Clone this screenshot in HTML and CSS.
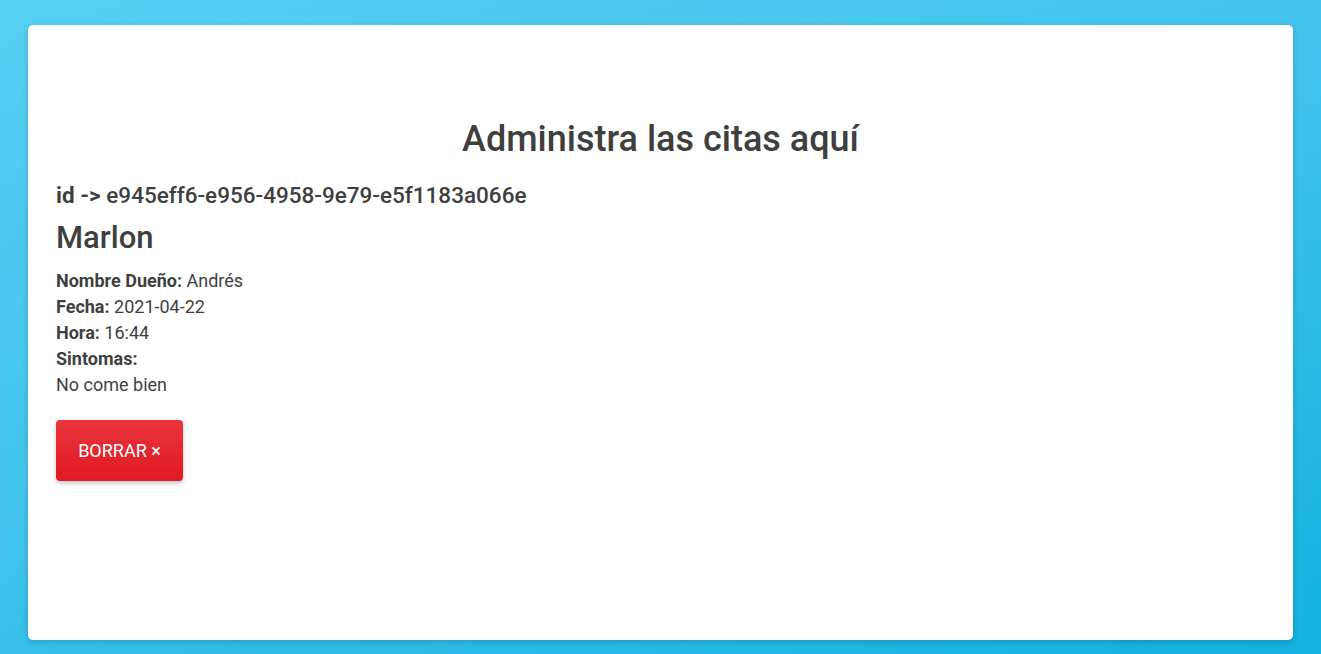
FILE: index.html
```html
<!DOCTYPE html>
<html lang="es">
<head>
<meta charset="utf-8">
<title>Citas</title>
<link rel="stylesheet" href="styles.css">
</head>
<body>
<main class="card">
  <h2 class="title">Administra las citas aquí</h2>
  <div class="cita">
    <h3 class="cita-id"><span class="id-label">id -&gt;</span> e945eff6-e956-4958-9e79-e5f1183a066e</h3>
    <h2 class="mascota">Marlon</h2>
    <p class="dato"><strong>Nombre Dueño:</strong> Andrés</p>
    <p class="dato"><strong>Fecha:</strong> 2021-04-22</p>
    <p class="dato"><strong>Hora:</strong> 16:44</p>
    <p class="dato"><strong>Sintomas:</strong></p>
    <p class="dato">No come bien</p>
    <button class="btn-borrar" type="button">BORRAR &times;</button>
  </div>
</main>
</body>
</html>
```
FILE: styles.css
```css
html, body {
  margin: 0;
  height: 100%;
}
body {
  background: linear-gradient(160deg, #57cff3 0%, #3fc2ec 50%, #13b1e1 100%);
  padding: 25px 28px 14px;
  box-sizing: border-box;
  font-family: Roboto, "Liberation Sans", sans-serif;
  color: #3f3f3f;
}
.card {
  background: #fff;
  border-radius: 5px;
  height: 615px;
  box-sizing: border-box;
  padding: 94px 28px 28px;
  box-shadow: 0 2px 6px rgba(0,0,0,0.18);
}
.title {
  margin: 0;
  text-align: center;
  font-size: 36px;
  font-weight: 500;
  line-height: 40px;
}
.cita {
  margin-top: 21px;
}
.cita-id {
  margin: 0;
  font-size: 22.5px;
  font-weight: 500;
  line-height: 30px;
}
.id-label {
  font-weight: 700;
}
.mascota {
  margin: 10px 0 12px;
  font-size: 31px;
  font-weight: 500;
  line-height: 36px;
}
.dato {
  margin: 0;
  font-size: 18px;
  line-height: 26px;
}
.dato strong {
  font-weight: 700;
}
.btn-borrar {
  margin-top: 22px;
  width: 127px;
  height: 61px;
  border: none;
  border-radius: 4px;
  background: linear-gradient(180deg, #e9343f 0%, #e01a22 100%);
  color: #fff;
  font-family: Roboto, "Liberation Sans", sans-serif;
  font-size: 18px;
  box-shadow: 0 2px 4px rgba(0,0,0,0.25);
  cursor: pointer;
}
```
